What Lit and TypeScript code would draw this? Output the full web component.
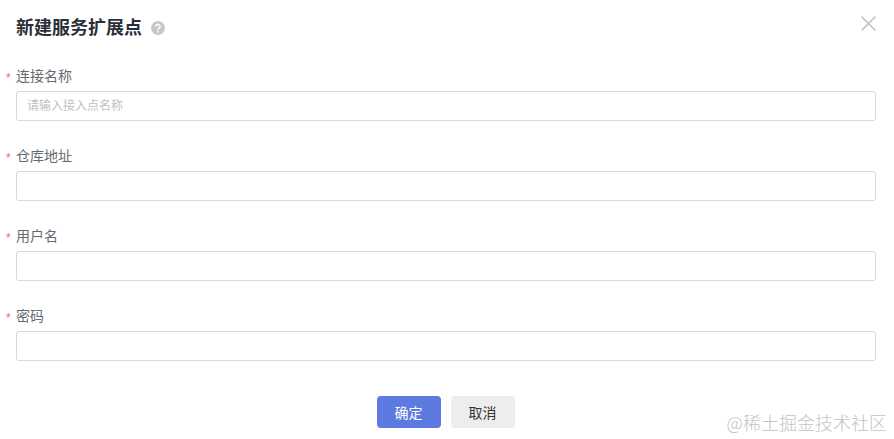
import { LitElement, css, html } from 'lit';
import { customElement, property } from 'lit/decorators.js';

const FIELDS = [
  { label: '连接名称', placeholder: '请输入接入点名称' },
  { label: '仓库地址', placeholder: '' },
  { label: '用户名', placeholder: '' },
  { label: '密码', placeholder: '' },
];

@customElement('form-field')
export class FormField extends LitElement {
  @property({ type: String })
  label = '';

  @property({ type: String })
  placeholder = '';

  static styles = css`
    :host {
      display: block;
      height: 80px;
    }

    .label {
      position: relative;
      height: 20px;
      padding-top: 5px;
      margin-bottom: 5px;
      font-size: 14px;
      line-height: 20px;
      color: #666a70;
    }

    .star {
      position: absolute;
      left: -10px;
      top: 7px;
      font-size: 12px;
      color: #e0716c;
    }

    input {
      display: block;
      box-sizing: border-box;
      width: 100%;
      height: 30px;
      padding: 0 10px;
      border: 1px solid #d9d9d9;
      border-radius: 3px;
      outline: none;
      background: #fff;
      font: inherit;
      font-size: 12px;
    }

    input::placeholder {
      color: #bfbfbf;
    }
  `;

  render() {
    return html`
      <div class="label"><span class="star">*</span>${this.label}</div>
      <input type="text" placeholder=${this.placeholder} />
    `;
  }
}

@customElement('app-root')
export class AppRoot extends LitElement {
  static styles = css`
    :host {
      display: block;
      position: relative;
      width: 894px;
      height: 439px;
      overflow: hidden;
      background: #fff;
      font-family: 'Liberation Sans', 'Noto Sans CJK SC', sans-serif;
    }

    .dialog {
      box-sizing: border-box;
      height: 100%;
      padding: 0 18px 0 16px;
    }

    .header {
      display: flex;
      align-items: center;
      height: 61px;
      padding-bottom: 5px;
      box-sizing: border-box;
    }

    h2 {
      margin: 0;
      font-size: 18px;
      font-weight: 700;
      line-height: 24px;
      color: #2b2f3a;
    }

    .help {
      margin-left: 9px;
      width: 14px;
      height: 14px;
    }

    .close {
      margin-left: auto;
      margin-top: -9px;
      width: 15px;
      height: 15px;
      padding: 0;
      border: none;
      background: none;
    }

    .fields {
      height: 335px;
    }

    .footer {
      display: flex;
      justify-content: center;
      gap: 10px;
      margin-left: -1px;
    }

    .btn {
      width: 64px;
      height: 32px;
      border: none;
      border-radius: 4px;
      padding: 0;
      font: inherit;
      font-size: 14px;
    }

    .primary {
      background: #5c7ae0;
      color: #fff;
    }

    .secondary {
      background: #ededed;
      color: #333;
    }

    .watermark {
      position: absolute;
      right: 7px;
      bottom: 5px;
      font-size: 18px;
      line-height: 24px;
      font-weight: 300;
      color: #c4c4c4;
      font-family: 'Noto Sans CJK SC', sans-serif;
      white-space: nowrap;
    }
  `;

  render() {
    return html`
      <div class="dialog">
        <div class="header">
          <h2>新建服务扩展点</h2>
          <svg class="help" viewBox="0 0 14 14">
            <circle cx="7" cy="7" r="7" fill="#c8c8c8" />
            <path
              d="M4.9 5.5a2.1 2.1 0 1 1 3.3 1.7c-.8.5-1.2.9-1.2 1.6"
              fill="none"
              stroke="#fff"
              stroke-width="1.4"
            />
            <circle cx="7" cy="10.6" r=".9" fill="#fff" />
          </svg>
          <button class="close" aria-label="关闭">
            <svg viewBox="0 0 15 15" width="15" height="15">
              <path d="M.6.6l13.8 13.8M14.4.6L.6 14.4" stroke="#c4c4c4" stroke-width="1.5" fill="none" />
            </svg>
          </button>
        </div>
        <div class="fields">
          ${FIELDS.map(
            (f) => html`<form-field .label=${f.label} .placeholder=${f.placeholder}></form-field>`
          )}
        </div>
        <div class="footer">
          <button class="btn primary">确定</button>
          <button class="btn secondary">取消</button>
        </div>
      </div>
      <div class="watermark">@稀土掘金技术社区</div>
    `;
  }
}
